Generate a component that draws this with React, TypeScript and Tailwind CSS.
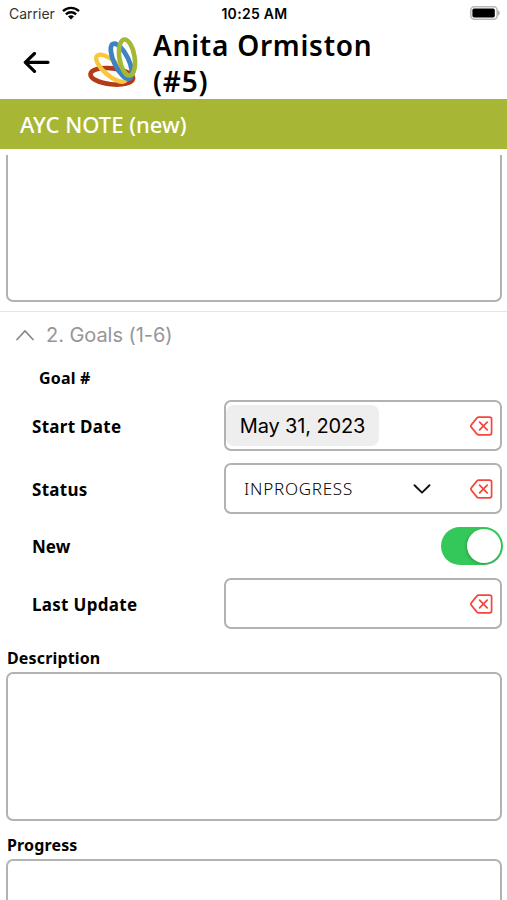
import React from 'react';

const LABEL_FONT = "font-['Noto_Sans','Open_Sans',sans-serif]";
const SYSTEM_FONT = "font-['Inter','Liberation_Sans',sans-serif]";

function Logo() {
  return (
    <svg className="w-[50px] h-[52px] shrink-0" viewBox="0 0 50 52" fill="none">
      <ellipse cx="23.8" cy="40.3" rx="21.4" ry="8" transform="rotate(6 23.8 40.3)" stroke="#b23c17" strokeWidth="4.6" />
      <ellipse cx="23.2" cy="32.2" rx="18.8" ry="7.4" transform="rotate(41 23.2 32.2)" stroke="#fcc63c" strokeWidth="4.400" />
      <ellipse cx="33.4" cy="25.2" rx="19.2" ry="7.2" transform="rotate(64 33.4 25.2)" stroke="#3d83c4" strokeWidth="4.8" />
      <ellipse cx="39" cy="21.500" rx="18.2" ry="7.6" transform="rotate(81 39 21.500)" stroke="#a3b935" strokeWidth="4.6" />
    </svg>
  );
}

function WifiIcon() {
  return (
    <svg className="w-[18px] h-[14px]" viewBox="0 0 18 14" fill="none" stroke="#000" strokeWidth="2.4">
      <path d="M1 5.1a11.6 11.6 0 0 1 16 0" />
      <path d="M3.9 8.3a7.3 7.3 0 0 1 10.2 0" />
      <path d="M9 13.6 6 10.6a4.2 4.2 0 0 1 6 0z" fill="#000" stroke="none" />
    </svg>
  );
}

function ClearIcon() {
  return (
    <svg
      className="w-[23px] h-5 shrink-0"
      viewBox="0 0 23 20"
      fill="none"
      stroke="#f4473c"
      strokeWidth="1.7"
      strokeLinecap="round"
      strokeLinejoin="round"
    >
      <path d="M8.7 1.2H19.6a2 2 0 0 1 2 2V16.8a2 2 0 0 1-2 2H8.7a2.4 2.4 0 0 1-1.7-.7L1.5 11.4a2 2 0 0 1 0-2.8L7 1.9a2.4 2.4 0 0 1 1.7-.7Z" />
      <path d="M9.6 6.1l7.6 7.8M17.2 6.1l-7.6 7.8" />
    </svg>
  );
}

function FieldRow({ label, children }: { label: string; children?: React.ReactNode }) {
  return (
    <div className="flex h-[51px] items-center pl-[31px] pr-[5px]">
      <div className="w-[193px] pt-[2px] pl-px">
        <span className="text-[17px] font-bold tracking-[0.3px]">{label}</span>
      </div>
      <div className="flex h-full flex-1 items-center justify-between rounded-[7px] border-2 border-[#b2b2b2] pr-[7px]">
        <div className="flex flex-1 items-center">{children}</div>
        <ClearIcon />
      </div>
    </div>
  );
}

export default function App() {
  return (
    <div className={`flex h-[900px] w-[507px] flex-col overflow-hidden bg-white text-black ${LABEL_FONT}`}>
      {/* Status bar */}
      <div className={`grid h-7 shrink-0 grid-cols-3 items-center pb-[2px] pl-[9px] pr-[7px] text-[14px] ${SYSTEM_FONT}`}>
        <div className="flex items-center gap-[7px]">
          <span className="text-[#333]">Carrier</span>
          <WifiIcon />
        </div>
        <span className="text-center font-semibold tracking-[0.3px] whitespace-nowrap">10:25 AM</span>
        <svg className="h-[14px] w-[30px] justify-self-end" viewBox="0 0 30 14">
          <rect x="0.8" y="0.8" width="26.4" height="12.4" rx="3.5" fill="#fff" stroke="#b9b9b9" strokeWidth="1.6" />
          <rect x="2.4" y="2.5" width="22.4" height="9" rx="1.8" fill="#000" />
          <path d="M28 4.5c2.4 1 2.4 4 0 5z" fill="#b0b0b0" />
        </svg>
      </div>

      {/* Header */}
      <div className="flex h-[71px] shrink-0 items-start pl-[23px]">
        <svg className="mt-6 h-[22px] w-[27px] shrink-0" viewBox="0 0 27 22" fill="none" stroke="#000" strokeWidth="3.2" strokeLinecap="round" strokeLinejoin="round">
          <path d="M25 10.3H2.5M11.5 1.5 2.3 10.3l9.2 9" />
        </svg>
        <div className="ml-[38px] mt-[8px]">
          <Logo />
        </div>
        <h1 className="-mt-px ml-[15px] text-[28px] leading-[36px] font-semibold tracking-[0.75px]">
          Anita Ormiston
          <br />
          (#5)
        </h1>
      </div>

      <div className="flex h-[50px] shrink-0 items-center bg-[#a8b636] pl-[20px] text-[22px] font-medium text-white">
        <span>AYC NOTE (new)</span>
      </div>

      {/* Scrolled form */}
      <div className="mt-[6px] flex-1 overflow-hidden">
        <div className="ml-[6px] mr-[5px] h-[147px] rounded-b-[7px] border-2 border-t-0 border-[#b2b2b2]" />

        <div className="mt-[9px] flex h-[47px] items-center border-t border-[#e5e5e5] pl-[16px]">
          <svg className="h-[12px] w-[18px]" viewBox="0 0 18 12" fill="none" stroke="#8a8a8e" strokeWidth="1.7" strokeLinecap="round" strokeLinejoin="round">
            <path d="M1 10.5 9 1.8l8 8.7" />
          </svg>
          <h2 className={`ml-[12px] text-[20px] tracking-[-0.05px] text-[#96969a] ${SYSTEM_FONT}`}>2. Goals (1-6)</h2>
        </div>

        <div className="flex h-[42px] items-center pb-[2px] pl-[39px] text-[16px] font-bold tracking-[0.2px]">
          <span>Goal #</span>
        </div>

        <div className="flex flex-col">
          <FieldRow label="Start Date">
            <span className={`flex h-[41px] w-[153px] items-center justify-center rounded-[8px] bg-[#eeeeef] text-[20px] tracking-[-0.15px] ${SYSTEM_FONT}`}>
              May 31, 2023
            </span>
          </FieldRow>
          <div className="h-3" />
          <FieldRow label="Status">
            <span className="ml-[18px] w-[169px] text-[17px] font-light tracking-[0.75px]">INPROGRESS</span>
            <svg className="h-[10px] w-[18px]" viewBox="0 0 18 10" fill="none" stroke="#111" strokeWidth="1.9" strokeLinecap="round" strokeLinejoin="round">
              <path d="M1.5 1.2 9 8.6l7.5-7.4" />
            </svg>
          </FieldRow>
          <div className="flex h-[64px] items-center justify-between pl-[32px] pr-[4px]">
            <span className="pt-[2px] text-[17px] font-bold">New</span>
            <div className="flex h-[38px] w-[62px] items-center justify-end rounded-full bg-[#34c759] p-[2px]">
              <div className="size-[34px] rounded-full bg-white shadow-[-1px_1px_3px_rgba(0,0,0,0.2)]" />
            </div>
          </div>
          <FieldRow label="Last Update" />
        </div>

        <div className="pl-[6px] pr-[5px]">
          <p className="mt-[17px] h-[26px] pl-px text-[16px] leading-[24px] font-bold tracking-[0.15px]">Description</p>
          <div className="h-[149px] rounded-[7px] border-2 border-[#b2b2b2]" />
          <p className="mt-[12px] h-[26px] pl-px text-[16px] leading-[24px] font-bold tracking-[0.15px]">Progress</p>
          <div className="h-[149px] rounded-[7px] border-2 border-[#b2b2b2]" />
        </div>
      </div>
    </div>
  );
}
